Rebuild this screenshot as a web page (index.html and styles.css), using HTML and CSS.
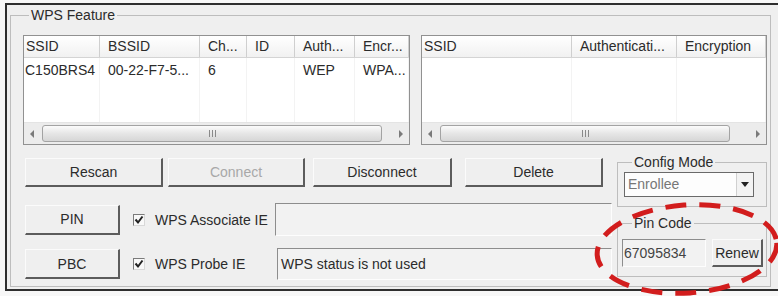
FILE: index.html
```html
<!DOCTYPE html>
<html>
<head>
<meta charset="utf-8">
<title>WPS Feature</title>
<link rel="stylesheet" href="styles.css">
</head>
<body>
<div class="window">
  <fieldset class="group main">
    <legend>WPS Feature</legend>
    <div class="lists">
      <div class="list list-ap">
        <div class="hdr cols-ap">
          <span class="cell first">SSID</span>
          <span class="cell">BSSID</span>
          <span class="cell">Ch...</span>
          <span class="cell">ID</span>
          <span class="cell">Auth...</span>
          <span class="cell">Encr...</span>
        </div>
        <div class="lbody cols-ap">
          <span class="cell first">C150BRS4</span>
          <span class="cell">00-22-F7-5...</span>
          <span class="cell">6</span>
          <span class="cell"></span>
          <span class="cell">WEP</span>
          <span class="cell">WPA...</span>
        </div>
        <div class="hscroll">
          <span class="arr"><svg width="5" height="8" viewBox="0 0 5 8"><path d="M4 0 L0 4 L4 8 Z"/></svg></span>
          <span class="track"><span class="thumb" style="width:340px"><span class="grip"></span></span></span>
          <span class="arr"><svg width="5" height="8" viewBox="0 0 5 8"><path d="M1 0 L5 4 L1 8 Z"/></svg></span>
        </div>
      </div>
      <div class="list list-wps">
        <div class="hdr cols-wps">
          <span class="cell first">SSID</span>
          <span class="cell">Authenticati...</span>
          <span class="cell">Encryption</span>
        </div>
        <div class="lbody cols-wps">
          <span class="cell first"></span>
          <span class="cell"></span>
          <span class="cell"></span>
        </div>
        <div class="hscroll">
          <span class="arr"><svg width="5" height="8" viewBox="0 0 5 8"><path d="M4 0 L0 4 L4 8 Z"/></svg></span>
          <span class="track"><span class="thumb" style="width:290px"><span class="grip"></span></span></span>
          <span class="arr"><svg width="5" height="8" viewBox="0 0 5 8"><path d="M1 0 L5 4 L1 8 Z"/></svg></span>
        </div>
      </div>
    </div>
    <div class="bottom">
      <div class="left">
        <div class="btnrow">
          <button class="btn b-rescan">Rescan</button>
          <button class="btn b-connect" disabled>Connect</button>
          <button class="btn b-disconnect">Disconnect</button>
          <button class="btn b-delete">Delete</button>
        </div>
        <div class="ctlrow row-pin">
          <button class="btn b-small">PIN</button>
          <span class="chk"><svg width="10" height="10" viewBox="0 0 10 10"><path d="M1.5 4.5 L4 7.5 L8.5 1.5"/></svg></span>
          <span class="chk-label">WPS Associate IE</span>
          <span class="field f-assoc"></span>
        </div>
        <div class="ctlrow row-pbc">
          <button class="btn b-small">PBC</button>
          <span class="chk"><svg width="10" height="10" viewBox="0 0 10 10"><path d="M1.5 4.5 L4 7.5 L8.5 1.5"/></svg></span>
          <span class="chk-label">WPS Probe IE</span>
          <span class="field f-status">WPS status is not used</span>
        </div>
      </div>
      <div class="right">
        <fieldset class="group sub cfg">
          <legend>Config Mode</legend>
          <div class="combo">
            <span class="combo-text">Enrollee</span>
            <span class="combo-btn"><svg width="8" height="5" viewBox="0 0 8 5"><path d="M0 0 L8 0 L4 5 Z"/></svg></span>
          </div>
        </fieldset>
        <fieldset class="group sub pin">
          <legend>Pin Code</legend>
          <div class="pinrow">
            <span class="field pinfield">67095834</span>
            <button class="btn b-renew">Renew</button>
          </div>
        </fieldset>
      </div>
    </div>
  </fieldset>
</div>
<svg class="mark" width="778" height="296" viewBox="0 0 778 296">
  <ellipse cx="687" cy="249" rx="90" ry="44" transform="rotate(-4 687 249)" fill="none" stroke="#d21d1d" stroke-width="5" stroke-dasharray="21 13"/>
</svg>
</body>
</html>
```
FILE: styles.css
```css
* { box-sizing: border-box; }
html, body { margin: 0; padding: 0; }
body {
  width: 778px;
  height: 296px;
  overflow: hidden;
  position: relative;
  background: #f7f7f7;
  font-family: "Liberation Sans", Arial, sans-serif;
  font-size: 14px;
  color: #2b2b2b;
}
.window {
  margin: 3px 0 0 5px;
  width: 790px;
  height: 288px;
  border: 2px solid #2e2e2e;
  border-right: 0;
  background: #efefef;
}
.group {
  margin: 0;
  padding: 0;
  min-width: 0;
  border: 1px solid #bdbdbd;
}
.group > legend {
  padding: 0 2px;
  height: 16px;
  line-height: 16px;
}
.main {
  margin: 2px 0 0 3px;
  width: 761px;
  height: 280px;
  padding: 12px 3px 0 12px;
}
.main > legend { margin-left: 6px; }

/* list views */
.lists { display: flex; gap: 11px; }
.list {
  height: 110px;
  border: 1px solid #919191;
  background: #fff;
  display: flex;
  flex-direction: column;
}
.list-ap { width: 387px; }
.list-wps { width: 346px; }
.cols-ap { display: grid; grid-template-columns: 76px 100px 47px 48px 60px 1fr; }
.cols-wps { display: grid; grid-template-columns: 150px 105px 1fr; }
.hdr {
  height: 22px;
  background: linear-gradient(#ffffff, #f1f1f1);
  border-bottom: 1px solid #d4d4d4;
}
.hdr .cell {
  border-right: 1px solid #cfcfcf;
  line-height: 21px;
  padding-left: 8px;
  white-space: nowrap;
  overflow: hidden;
}
.hdr .cell.first { padding-left: 2px; }
.lbody { flex: 1; }
.lbody .cell {
  border-right: 1px solid #f3f3f3;
  padding: 2px 0 0 8px;
  line-height: 20px;
  white-space: nowrap;
}
.lbody .cell.first { padding-left: 1px; }
.hscroll {
  height: 22px;
  display: flex;
  align-items: center;
  background: #ececec;
  border-top: 1px solid #e4e4e4;
}
.arr {
  width: 17px;
  height: 100%;
  display: flex;
  align-items: center;
  justify-content: center;
}
.arr svg { fill: #7a7a7a; }
.track { flex: 1; height: 100%; display: flex; align-items: center; padding-left: 1px; }
.thumb {
  height: 17px;
  border: 1px solid #a3a3a3;
  border-radius: 3px;
  background: linear-gradient(#fbfbfb, #e6e6e6 50%, #d6d6d6);
  display: flex;
  align-items: center;
  justify-content: center;
}
.grip {
  width: 7px;
  height: 7px;
  background: linear-gradient(90deg, #8a8a8a 0 1px, transparent 1px 3px, #8a8a8a 3px 4px, transparent 4px 6px, #8a8a8a 6px 7px);
}

/* bottom area */
.bottom { display: grid; grid-template-columns: 594px 150px; }
.left { padding: 13px 0 0 2px; }
.btn {
  font: inherit;
  color: #2b2b2b;
  background: #efefef;
  border: 0;
  border-top: 1px solid #fbfbfb;
  border-left: 1px solid #fbfbfb;
  border-right: 2px solid #5c5c5c;
  border-bottom: 2px solid #5c5c5c;
  padding: 0;
  text-align: center;
}
.btn:disabled { color: #a8a8a8; }
.btnrow { display: flex; height: 29px; }
.btnrow .btn { height: 29px; }
.b-rescan { width: 138px; }
.b-connect { width: 137px; margin-left: 5px; }
.b-disconnect { width: 139px; margin-left: 8px; }
.b-delete { width: 138px; margin-left: 13px; }

.ctlrow { display: flex; align-items: center; }
.row-pin { margin-top: 16px; height: 33px; }
.row-pbc { margin-top: 12px; height: 32px; }
.b-small { width: 95px; height: 30px; }
.chk {
  width: 12px;
  height: 12px;
  margin-left: 13px;
  border: 1px solid #7b7b7b;
  border-right-color: #d8d8d8;
  border-bottom-color: #d8d8d8;
  background: #f8f8f8;
  display: flex;
  align-items: center;
  justify-content: center;
}
.chk svg path { fill: none; stroke: #222; stroke-width: 2; }
.chk-label { width: 120px; margin-left: 10px; white-space: nowrap; }
.field {
  background: #f2f2f2;
  border: 1px solid #8d8d8d;
  border-right-color: #fdfdfd;
  border-bottom-color: #fdfdfd;
  white-space: nowrap;
}
.f-assoc { width: 337px; height: 33px; }
.f-status { width: 335px; height: 32px; margin-left: 2px; line-height: 31px; padding-left: 3px; }

/* right column */
.right { padding-top: 9px; display: flex; flex-direction: column; gap: 8px; }
.cfg { height: 53px; padding: 2px 0 0 6px; }
.cfg > legend { margin-left: 8px; }
.combo {
  width: 130px;
  height: 25px;
  display: flex;
  border: 1px solid #6a6a6a;
  background: #fdfdfd;
}
.combo-text { flex: 1; color: #777; line-height: 23px; padding-left: 3px; }
.combo-btn {
  width: 17px;
  display: flex;
  align-items: center;
  justify-content: center;
  background: #f3f3f3;
  border-left: 1px solid #d0d0d0;
}
.combo-btn svg { fill: #222; }
.pin { height: 62px; padding: 8px 0 0 4px; }
.pin > legend { margin-left: 10px; }
.pinrow { display: flex; gap: 6px; }
.pinfield { width: 84px; height: 28px; line-height: 26px; padding-left: 1px; color: #444; }
.b-renew { width: 51px; height: 28px; }

.mark { position: absolute; left: 0; top: 0; pointer-events: none; }
```
